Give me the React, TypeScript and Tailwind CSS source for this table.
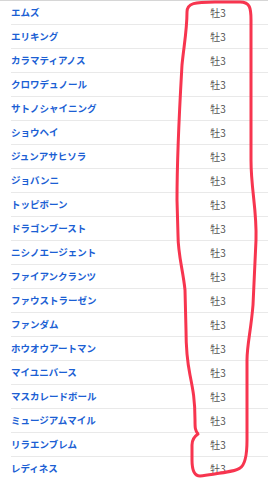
import React from 'react';

const HORSES = [
  'エムズ',
  'エリキング',
  'カラマティアノス',
  'クロワデュノール',
  'サトノシャイニング',
  'ショウヘイ',
  'ジュンアサヒソラ',
  'ジョバンニ',
  'トッピボーン',
  'ドラゴンブースト',
  'ニシノエージェント',
  'ファイアンクランツ',
  'ファウストラーゼン',
  'ファンダム',
  'ホウオウアートマン',
  'マイユニバース',
  'マスカレードボール',
  'ミュージアムマイル',
  'リラエンブレム',
  'レディネス',
];

const FONT = '"Noto Sans CJK JP", "Noto Sans", sans-serif';

export default function App() {
  return (
    <div className="relative w-[268px] h-[480px] overflow-hidden bg-white" style={{ fontFamily: FONT }}>
      <div className="h-[1px] bg-[#d6d6d6]" />
      <div className="flex flex-col">
        {HORSES.map((name) => (
          <div key={name} className="ml-[11px] h-[24px] flex items-center border-b border-[#e9e9e9]">
            <span className="flex-1 text-[9.5px] font-bold text-[#1c5fd4] leading-none">{name}</span>
            <span className="w-[100px] text-center text-[10px] text-[#555555] leading-none">牡3</span>
          </div>
        ))}
      </div>

      {/* hand-drawn highlight round the sex/age column */}
      <svg className="absolute inset-0 pointer-events-none" width="268" height="480" viewBox="0 0 268 480">
        <path
          d="M 187 12 C 187 3, 195 2, 215 2 L 240 2 C 250 2, 251 8, 251 20 L 251 160 C 251 190, 257 210, 256 240 L 253 305 C 251 330, 247 345, 247 360 L 247 440 C 247 455, 245 465, 240 468 C 235 472, 220 473, 200 476 C 193 476, 192 468, 192 460 L 192 445 C 192 440, 195 436, 198 434 C 195 430, 195 428, 195 420 C 195 400, 193 390, 190 375 C 187 360, 186 345, 186 330 L 185 290 C 183 270, 178 255, 178 235 L 177 200 C 177 150, 180 100, 182 65 C 184 45, 187 30, 187 12 Z"
          fill="none"
          stroke="#f7354f"
          strokeWidth="3"
          strokeLinecap="round"
          strokeLinejoin="round"
        />
      </svg>
    </div>
  );
}
